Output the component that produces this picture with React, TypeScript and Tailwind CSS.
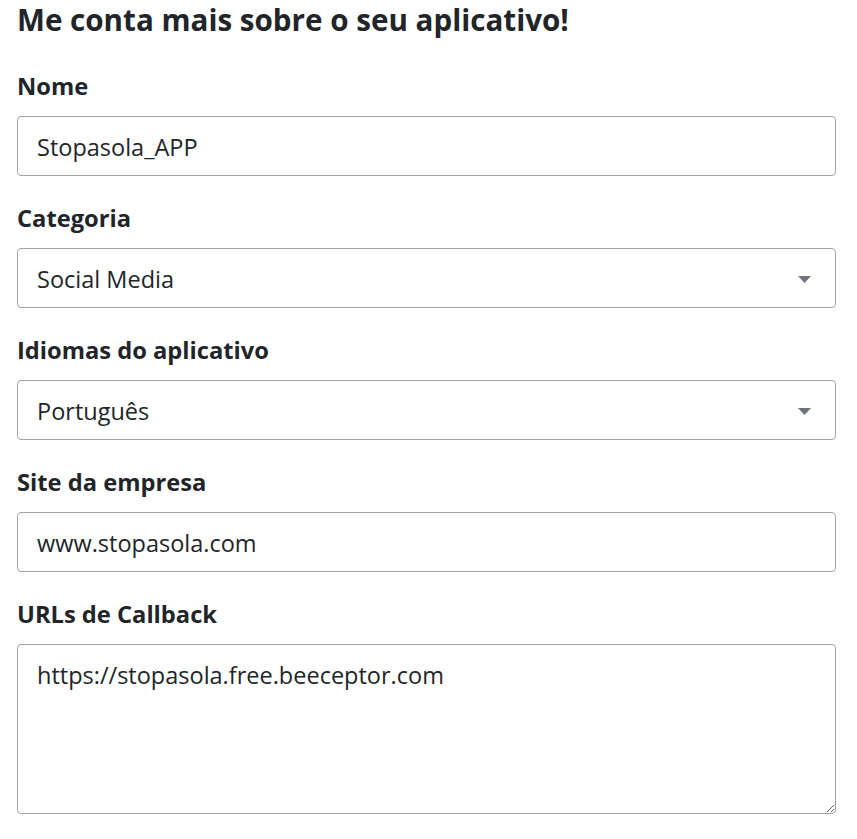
import React from "react";

const Caret = () => (
  <svg width="13" height="7" viewBox="0 0 13 7" className="absolute right-[24px] top-[27px]">
    <path d="M0 0 L13 0 L6.5 7 Z" fill="#6c757d" />
  </svg>
);

const Label = ({ children }: { children: React.ReactNode }) => (
  <div className="text-[23.7px] leading-[35px] font-bold text-[#212529] mb-[12px]">{children}</div>
);

const Field = ({ children }: { children: React.ReactNode }) => (
  <div className="relative h-[60px] w-[819px] border border-[#a3a3a3] rounded-[4px] flex items-center px-[19px] pt-[4px] text-[23.5px] leading-[35.5px] text-[#212529] bg-white">
    {children}
  </div>
);

export default function App() {
  return (
    <div className="bg-white min-h-[839px] pl-[17px]" style={{ fontFamily: '"Open Sans", sans-serif' }}>
      <div className="text-[29.6px] leading-[40px] font-bold text-[#212529] mb-[29px]">Me conta mais sobre o seu aplicativo!</div>
      <Label>Nome</Label>
      <Field>Stopasola_APP</Field>
      <div className="h-[25px]" />
      <Label>Categoria</Label>
      <Field>
        Social Media
        <Caret />
      </Field>
      <div className="h-[25px]" />
      <Label>Idiomas do aplicativo</Label>
      <Field>
        Português
        <Caret />
      </Field>
      <div className="h-[25px]" />
      <Label>Site da empresa</Label>
      <Field>www.stopasola.com</Field>
      <div className="h-[25px]" />
      <Label>URLs de Callback</Label>
      <textarea
        defaultValue="https://stopasola.free.beeceptor.com"
        className="block w-[819px] h-[170px] border border-[#a3a3a3] rounded-[4px] px-[19px] pt-[13px] text-[23.5px] leading-[35.5px] text-[#212529] outline-none"
        style={{ fontFamily: '"Open Sans", sans-serif' }}
      />
    </div>
  );
}
